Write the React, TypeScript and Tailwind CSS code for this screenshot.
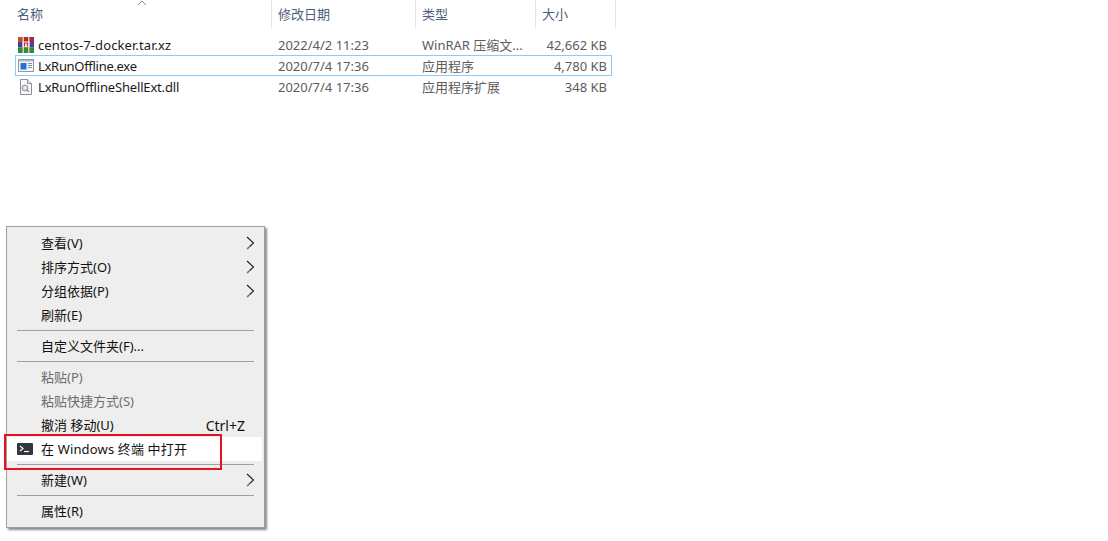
const files = [
  { name: "centos-7-docker.tar.xz", date: "2022/4/2 11:23", type: "WinRAR 压缩文...", size: "42,662 KB", icon: "rar", nameClass: "tracking-[0.1px]" },
  { name: "LxRunOffline.exe", date: "2020/7/4 17:36", type: "应用程序", size: "4,780 KB", icon: "exe", focused: true, nameClass: "tracking-[-0.3px]" },
  { name: "LxRunOfflineShellExt.dll", date: "2020/7/4 17:36", type: "应用程序扩展", size: "348 KB", icon: "dll", nameClass: "tracking-[-0.17px]" },
];

const RarIcon = () => (
  <svg width="16" height="16" viewBox="0 0 16 16" className="shrink-0">
    <rect x="0" y="0" width="16" height="5" fill="#a8293f" />
    <rect x="0" y="0" width="5" height="5" fill="#c0502e" />
    <rect x="0" y="5" width="16" height="5.5" fill="#45409c" />
    <rect x="0" y="10.5" width="16" height="5.5" fill="#2f8a3c" />
    <rect x="4.5" y="0" width="1.5" height="16" fill="#e6c79c" />
    <rect x="10" y="0" width="1.5" height="16" fill="#e6c79c" />
    <path d="M4.5 4.5h7v5.5h-7z" fill="#f6f3ec" />
    <path d="M6.5 9.5V6h3v3.5" fill="none" stroke="#c8282a" strokeWidth="1.2" />
  </svg>
);

const ExeIcon = () => (
  <svg width="16" height="16" viewBox="0 0 16 16" className="shrink-0">
    <rect x="0.5" y="1.5" width="15" height="12" fill="#f3f6fa" stroke="#8d9aab" />
    <rect x="1" y="2" width="14" height="1.5" fill="#aebccd" />
    <rect x="2.5" y="5" width="6" height="6.5" fill="#1f74c9" />
    <path d="M10 5.5h4M10 7.5h4M10 9.5h4" stroke="#7f8fa3" strokeWidth="1" />
  </svg>
);

const DllIcon = () => (
  <svg width="16" height="16" viewBox="0 0 16 16" className="shrink-0">
    <path d="M2.5.5h7l4 4v11h-11z" fill="#fbfbfb" stroke="#8a8f96" />
    <path d="M9.5.5v4h4" fill="#e6e8ea" stroke="#8a8f96" />
    <circle cx="7" cy="9" r="3" fill="#d5d8dc" stroke="#8f959c" />
    <circle cx="7" cy="9" r="1" fill="#fbfbfb" />
    <path d="M8.5 10.5l2.5 2.5" stroke="#8f959c" strokeWidth="1.2" />
  </svg>
);

const Chevron = () => (
  <svg width="9" height="14" viewBox="0 0 9 14" className="ml-auto mr-[9px] shrink-0 -translate-y-px">
    <path d="M1 1l6.5 6L1 13" fill="none" stroke="#222" strokeWidth="1.1" />
    <path d="M1 13l3-2.8" fill="none" stroke="#c47a20" strokeWidth="1" />
  </svg>
);

const Sep = () => (
  <div className="py-[3px] pl-[10px] pr-[10px]">
    <div className="h-px bg-[#a0a0a0]" />
  </div>
);

const MenuItem = ({ label, sub, disabled, hint }: { label: string; sub?: boolean; disabled?: boolean; hint?: string }) => (
  <div className={`flex h-6 items-center pl-[34px] pt-[2px] ${disabled ? "text-[#6d6d6d]" : "text-[#111]"}`}>
    <span>{label}</span>
    {hint && <span className="ml-auto mr-[19px] -translate-y-px text-[14px]">{hint}</span>}
    {sub && <Chevron />}
  </div>
);

const App = () => {
  return (
    <div className="relative h-[541px] w-[1108px] overflow-hidden bg-white text-[13px] font-['Noto_Sans','Noto_Sans_CJK_SC',sans-serif]">
      {/* Column header */}
      <div className="flex h-7 w-[616px] text-[#4c607a]">
        <div className="relative w-[272px] border-r border-[#e5e5e5] pl-[17px] leading-[28px]">
          名称
          <svg width="10" height="6" viewBox="0 0 10 6" className="absolute left-[137px] top-0">
            <path d="M1 5l4-4 4 4" fill="none" stroke="#8a8a8a" strokeWidth="1" />
          </svg>
        </div>
        <div className="w-[144px] border-r border-[#e5e5e5] pl-[6px] leading-[28px]">修改日期</div>
        <div className="w-[120px] border-r border-[#e5e5e5] pl-[6px] leading-[28px]">类型</div>
        <div className="w-[80px] border-r border-[#e5e5e5] pl-[6px] leading-[28px]">大小</div>
      </div>

      {/* File rows */}
      <div className="ml-[15px] mt-[6px] w-[597px]">
        {files.map((f) => (
          <div
            key={f.name}
            className={`flex h-[21px] items-center border ${f.focused ? "border-[#8fcbfa]" : "border-transparent"}`}
          >
            <div className="flex w-[256px] items-center gap-1 pl-[2px] text-[#1a1a1a]">
              {f.icon === "rar" && <RarIcon />}
              {f.icon === "exe" && <ExeIcon />}
              {f.icon === "dll" && <DllIcon />}
              <span className={`pt-[2px] ${f.nameClass}`}>{f.name}</span>
            </div>
            <div className="w-[144px] pl-[6px] pt-[2px] text-[#5c5c5c]">{f.date}</div>
            <div className="w-[120px] pl-[6px] pt-[2px] text-[#5c5c5c]">{f.type}</div>
            <div className="flex-1 pr-[4px] pt-[2px] text-right text-[#5c5c5c]">{f.size}</div>
          </div>
        ))}
      </div>

      {/* Context menu */}
      <div className="absolute left-[6px] top-[226px] w-[259px] border border-[#a0a0a0] bg-[#eeeeee] py-1 shadow-[2px_2px_2px_rgba(0,0,0,0.45)]">
        <MenuItem label="查看(V)" sub />
        <MenuItem label="排序方式(O)" sub />
        <MenuItem label="分组依据(P)" sub />
        <MenuItem label="刷新(E)" />
        <Sep />
        <MenuItem label="自定义文件夹(F)..." />
        <Sep />
        <MenuItem label="粘贴(P)" disabled />
        <MenuItem label="粘贴快捷方式(S)" disabled />
        <MenuItem label="撤消 移动(U)" hint="Ctrl+Z" />
        <div className="mr-[2px] flex h-6 items-center bg-white pl-[10px] text-[#111]">
          <svg width="16" height="12" viewBox="0 0 16 12" className="mr-2 shrink-0">
            <rect width="16" height="12" rx="1" fill="#33363b" />
            <path d="M3 3l3 2.5L3 8" fill="none" stroke="#fff" strokeWidth="1.2" />
            <path d="M7 8.5h5" stroke="#fff" strokeWidth="1.2" />
          </svg>
          <span className="pt-[2px] tracking-[0.15px]">在 Windows 终端 中打开</span>
        </div>
        <Sep />
        <MenuItem label="新建(W)" sub />
        <Sep />
        <MenuItem label="属性(R)" />
      </div>

      {/* Red annotation box */}
      <div className="absolute left-[4px] top-[434px] h-[36px] w-[218px] border-2 border-[#e81123]" />
    </div>
  );
};

export default App;
